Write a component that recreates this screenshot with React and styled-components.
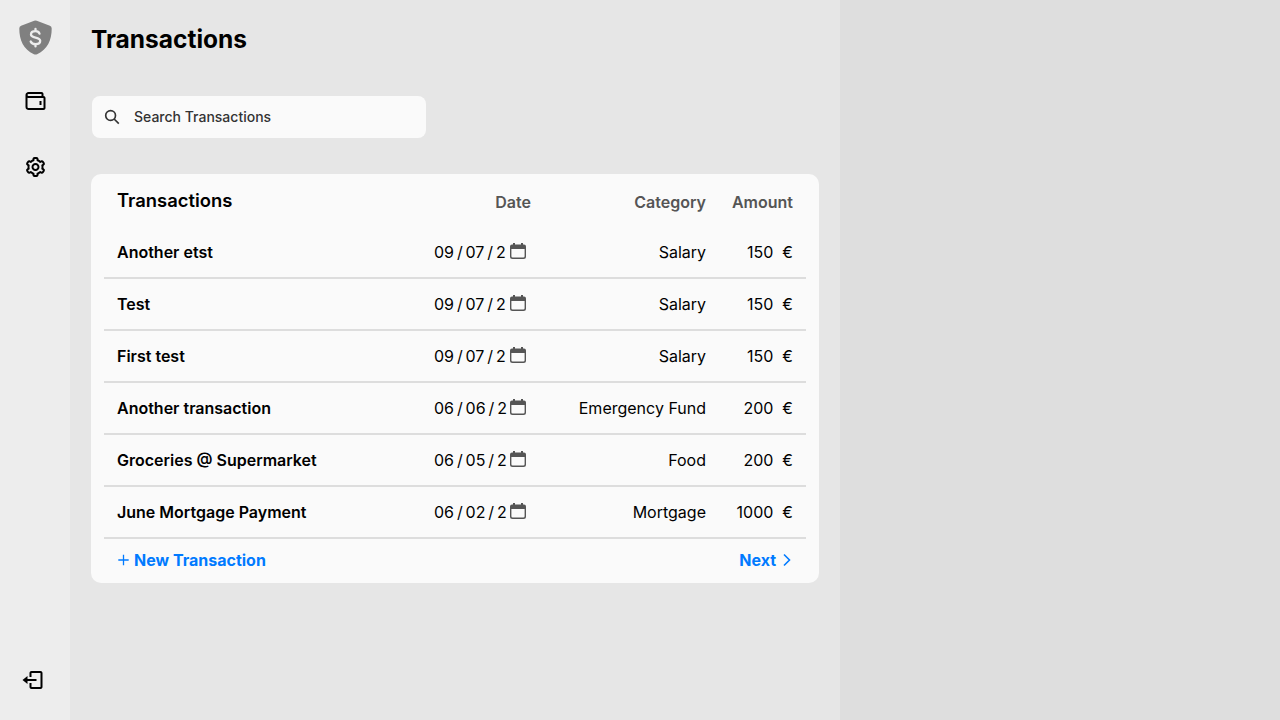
import React from "react";
import styled, { createGlobalStyle } from "styled-components";
import { BiWallet, BiCog, BiLogOut } from "react-icons/bi";

const GlobalStyle = createGlobalStyle`
  * { box-sizing: border-box; }
  body { margin: 0; background: #dedede; font-family: Inter, "Liberation Sans", sans-serif; color: #000; }
`;

const Page = styled.div`
  display: flex;
  height: 720px;
`;

const Sidebar = styled.nav`
  width: 70px;
  background: #ededed;
  display: flex;
  flex-direction: column;
  align-items: center;
  padding: 20px 0 28px;
`;

const NavItem = styled.a`
  display: flex;
  width: 24px;
  height: 24px;
  margin-top: ${(p) => p.$top || 0};
  margin-left: ${(p) => p.$left || "0"};

  path {
    transform: translateX(0.5px);
  }
`;

const Logo = styled.svg`
  display: block;
  width: 34px;
  height: 35px;
`;

const Main = styled.main`
  width: 770px;
  background: #e6e6e6;
  padding: 24px 21px 0;
`;

const PageTitle = styled.h1`
  margin: 0;
  font-size: 24.5px;
  line-height: 31px;
  font-weight: 700;
`;

const SearchBox = styled.div`
  display: flex;
  align-items: center;
  width: 334px;
  height: 42px;
  margin: 41px 0 0 1px;
  padding-left: 11px;
  border-radius: 8px;
  background: #fafafa;
  color: #333;
`;

const SearchText = styled.span`
  margin-left: 13px;
  padding-bottom: 2px;
  font-size: 14px;
  font-weight: 500;
`;

const Card = styled.section`
  margin-top: 36px;
  height: 409px;
  padding: 0 13px;
  border-radius: 10px;
  background: #fafafa;
`;

const Row = styled.div`
  display: grid;
  grid-template-columns: 1fr 97px 175px 87px;
  align-items: center;
  height: 52px;
  padding: 0 13px;
  border-bottom: 2px solid #dddddd;
  font-size: 16px;
  line-height: 20px;
`;

const HeaderRow = styled(Row)`
  height: 53px;
  padding-top: 3px;
  border-bottom: 0;
  color: #555;
  font-weight: 600;
`;

const CardTitle = styled.h2`
  margin: 0;
  padding-bottom: 5px;
  font-size: 18.4px;
  font-weight: 600;
  color: #000;
`;

const Name = styled.span`
  font-weight: 600;
`;

const Cell = styled.span`
  text-align: right;
  white-space: pre;
`;

const DateField = styled.span`
  display: flex;
  align-items: center;
  justify-content: space-between;
  padding-right: 5px;
`;

const DateText = styled.span`
  display: flex;
`;

const Slash = styled.span`
  padding: 0 2.9px;
`;

const CalendarIcon = styled.svg`
  width: 16px;
  height: 16px;
  margin-top: -3px;
`;

const Footer = styled.div`
  display: flex;
  align-items: center;
  justify-content: space-between;
  height: 42px;
  padding: 0 13px;
`;

const Action = styled.a`
  display: flex;
  align-items: center;
  gap: 4px;
  color: #007aff;
  font-size: 16px;
  font-weight: 700;
`;

const rows = [
  ["Another etst", "09", "07", "Salary", "150"],
  ["Test", "09", "07", "Salary", "150"],
  ["First test", "09", "07", "Salary", "150"],
  ["Another transaction", "06", "06", "Emergency Fund", "200"],
  ["Groceries @ Supermarket", "06", "05", "Food", "200"],
  ["June Mortgage Payment", "06", "02", "Mortgage", "1000"],
];

function ShieldLogo() {
  return (
    <Logo viewBox="-0.5 0 34 35">
      <path
        fill="#808080"
        d="M15.7 .7Q17 .1 18.3 .7L31.4 5.8Q33.2 6.6 33.2 8.6C33.2 20.5 29 29.5 18.6 34.2Q17 34.9 15.4 34.2C5 29.5 .8 20.5 .8 8.6Q.8 6.6 2.6 5.8Z"
      />
      <path
        fill="none"
        stroke="#ededed"
        strokeWidth="2.3"
        strokeLinecap="round"
        strokeLinejoin="round"
        d="M17 9V11.2M17 24.200V26.400M21 13.600C20.400 12 19 11.200 17 11.200C14.500 11.200 12.500 12.400 12.500 14.400C12.500 18.600 21.700 16.400 21.700 20.800C21.700 23 19.700 24.200 17.100 24.200C14.700 24.200 12.900 23.200 12.200 21.500"
      />
    </Logo>
  );
}

function SearchIcon() {
  return (
    <svg width="18" height="18" viewBox="0 0 18 18" fill="none" stroke="currentColor" strokeWidth="1.65">
      <circle cx="7.6" cy="7.5" r="4.9" />
      <path d="M11.1 11L15.8 15.7" />
    </svg>
  );
}

function Calendar() {
  return (
    <CalendarIcon viewBox="0 0 16 16" fill="#555">
      <path d="M3 0H5V1.5H11V0H13V1.5H14Q16 1.5 16 3.5V13.5Q16 16 13.5 16H2.5Q0 16 0 13.5V3.5Q0 1.5 2 1.5H3ZM1.4 6V13.3Q1.4 14.6 2.7 14.6H13.3Q14.6 14.6 14.6 13.3V6Z" />
    </CalendarIcon>
  );
}

export default function App() {
  return (
    <Page>
      <GlobalStyle />
      <Sidebar>
        <ShieldLogo />
        <NavItem $top="34px"><BiWallet size={24} /></NavItem>
        <NavItem $top="42px"><BiCog size={24} /></NavItem>
        <NavItem $top="auto" $left="-6px"><BiLogOut size={24} /></NavItem>
      </Sidebar>
      <Main>
        <PageTitle>Transactions</PageTitle>
        <SearchBox>
          <SearchIcon />
          <SearchText>Search Transactions</SearchText>
        </SearchBox>
        <Card>
          <HeaderRow>
            <CardTitle>Transactions</CardTitle>
            <Cell>Date</Cell>
            <Cell>Category</Cell>
            <Cell>Amount</Cell>
          </HeaderRow>
          {rows.map(([name, month, day, category, amount]) => (
            <Row key={name}>
              <Name>{name}</Name>
              <DateField>
                <DateText>
                  {month}<Slash>/</Slash>{day}<Slash>/</Slash>2
                </DateText>
                <Calendar />
              </DateField>
              <Cell>{category}</Cell>
              <Cell>{amount + "  €"}</Cell>
            </Row>
          ))}
          <Footer>
            <Action>
              <svg width="13" height="14" viewBox="0 0 13 14" fill="none" stroke="currentColor" strokeWidth="1.3">
                <path d="M1.3 7H11.7M6.5 1.8V12.2" />
              </svg>
              New Transaction
            </Action>
            <Action>
              Next
              <svg width="13" height="14" viewBox="0 0 13 14" fill="none" stroke="currentColor" strokeWidth="1.6">
                <path d="M4 1.5L9.5 7L4 12.5" />
              </svg>
            </Action>
          </Footer>
        </Card>
      </Main>
    </Page>
  );
}
